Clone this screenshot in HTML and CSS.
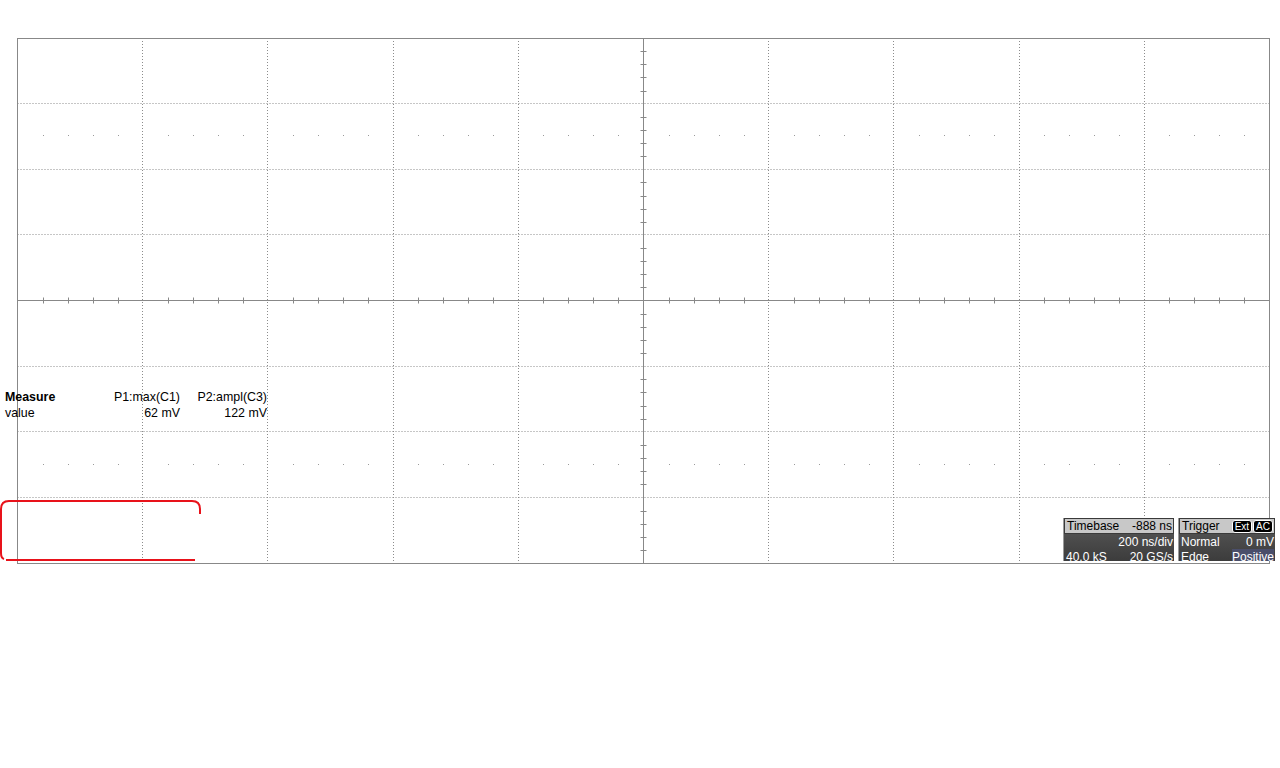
FILE: index.html
```html
<!DOCTYPE html>
<html>
<head>
<meta charset="utf-8">
<link rel="stylesheet" href="styles.css">
</head>
<body>
<div class="scope">
  <svg class="grid" width="1280" height="768" viewBox="0 0 1280 768" id="grid"></svg>

  <div class="measure">
    <div class="m-label b">Measure</div><div class="m-val">P1:max(C1)</div><div class="m-val">P2:ampl(C3)</div>
    <div class="m-label">value</div><div class="m-val">62 mV</div><div class="m-val">122 mV</div>
  </div>

  <svg class="redbox" width="204" height="64" viewBox="0 0 204 64">
    <path d="M200 14 V9 Q200 1 192 1 H9 Q1 1 1 9 V53 Q1 58 4 59" fill="none" stroke="#e8121a" stroke-width="2"/>
    <path d="M6 60 H195" fill="none" stroke="#e8121a" stroke-width="2"/>
  </svg>

  <div class="panel timebase">
    <div class="p-head"><span>Timebase</span><span>-888 ns</span></div>
    <div class="p-row"><span></span><span>200 ns/div</span></div>
    <div class="p-row"><span>40.0 kS</span><span>20 GS/s</span></div>
  </div>

  <div class="panel trigger">
    <div class="p-head"><span>Trigger</span><span class="badges"><span class="badge">Ext</span><span class="badge">AC</span></span></div>
    <div class="p-row"><span>Normal</span><span>0 mV</span></div>
    <div class="p-row"><span>Edge</span><span class="hl">Positive</span></div>
  </div>
</div>
<script src="grid.js"></script>
</body>
</html>
```

FILE: grid.js
```js
(function () {
  var svg = document.getElementById('grid');
  var L = 17.5, R = 1269.5, T = 38, B = 563;
  var dx = (R - L) / 10, dy = (B - T) / 8;
  var out = [];
  function line(x1, y1, x2, y2, cls) {
    out.push('<line x1="' + x1 + '" y1="' + y1 + '" x2="' + x2 + '" y2="' + y2 + '" class="' + cls + '"/>');
  }
  function r(v) { return Math.round(v - 0.5) + 0.5; }
  for (var i = 1; i < 10; i++) {
    if (i === 5) continue;
    var x = r(L + dx * i);
    line(x, T, x, B, 'dot');
  }
  for (var j = 1; j < 8; j++) {
    if (j === 4) continue;
    var y = r(T + dy * j);
    line(L, y, R, y, 'dot');
  }
  var cx = r(L + dx * 5), cy = r(T + dy * 4);
  line(cx, T, cx, B, 'axis');
  line(L, cy, R, cy, 'axis');
  for (var k = 1; k < 50; k++) {
    if (k % 5 === 0) continue;
    var tx = Math.round(L + dx * k / 5) + 0.5;
    line(tx, cy - 3, tx, cy + 3, 'axis');
    out.push('<rect x="' + (tx - 0.5) + '" y="' + (T + dy * 1.5 - 0.5 | 0) + '" width="1" height="1" class="pt"/>');
    out.push('<rect x="' + (tx - 0.5) + '" y="' + (T + dy * 6.5 - 0.5 | 0) + '" width="1" height="1" class="pt"/>');
  }
  for (var m = 1; m < 40; m++) {
    if (m % 5 === 0) continue;
    var ty = Math.round(T + dy * m / 5) + 0.5;
    line(cx - 3, ty, cx + 3, ty, 'axis');
  }
  out.push('<rect x="' + L + '" y="' + (T + 0.5) + '" width="' + (R - L) + '" height="' + (B - T) + '" class="frame"/>');
  svg.innerHTML = out.join('');
})();
```

FILE: styles.css
```css
html, body {
  margin: 0;
  padding: 0;
  background: #ffffff;
}
body {
  font-family: "Liberation Sans", Arial, sans-serif;
  font-size: 12px;
  color: #000;
}
.scope {
  position: relative;
  width: 1280px;
  height: 768px;
  overflow: hidden;
}
.grid {
  position: absolute;
  left: 0;
  top: 0;
}
.grid .dot {
  stroke: #8c8c8c;
  stroke-width: 1;
  stroke-dasharray: 1 2;
}
.grid .axis {
  stroke: #888888;
  stroke-width: 1;
}
.grid .frame {
  fill: none;
  stroke: #888888;
  stroke-width: 1;
}
.grid .pt {
  fill: #9a9a9a;
}
.measure {
  position: absolute;
  left: 5px;
  top: 389px;
  display: grid;
  grid-template-columns: 90px 85px 87px;
  line-height: 16px;
  font-size: 12.4px;
}
.m-label.b {
  font-weight: bold;
}
.m-val {
  text-align: right;
}
.redbox {
  position: absolute;
  left: 0;
  top: 500px;
}
.panel {
  position: absolute;
  top: 518px;
  height: 43px;
  overflow: hidden;
  background: linear-gradient(#5a5a5a, #3c3c3c);
  border-left: 1px solid #9a9a9a;
  color: #ffffff;
  box-sizing: border-box;
}
.timebase {
  left: 1063px;
  width: 111px;
}
.trigger {
  left: 1178px;
  width: 97px;
}
.p-head {
  display: flex;
  justify-content: space-between;
  align-items: center;
  height: 16px;
  background: #c8c8c8;
  color: #000;
  border: 1px solid #3a3a3a;
  box-sizing: border-box;
  padding: 0 1px 0 2px;
  line-height: 14px;
}
.p-row {
  display: flex;
  justify-content: space-between;
  height: 15px;
  line-height: 16px;
  padding: 0 1px 0 2px;
}
.badges {
  display: flex;
  gap: 1px;
}
.badge {
  background: #000;
  color: #fff;
  border-radius: 3px;
  font-size: 10px;
  line-height: 11px;
  padding: 0 2px;
  border: 1px solid #fff;
}
.hl {
  background: #4a4e6a;
}
```
